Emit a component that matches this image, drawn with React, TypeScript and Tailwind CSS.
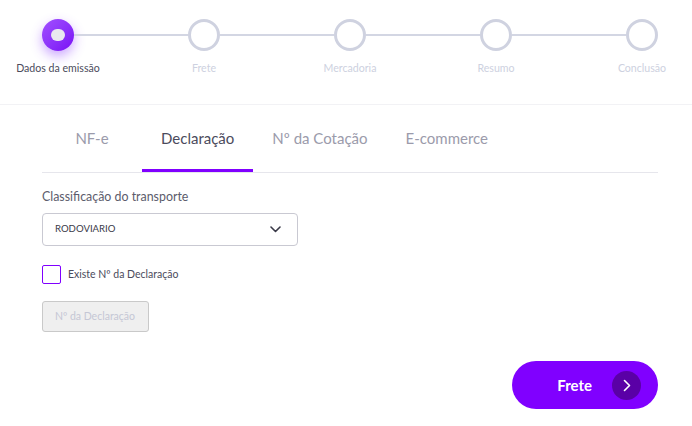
import React from "react";

const steps = ["Dados da emissão", "Frete", "Mercadoria", "Resumo", "Conclusão"];
const tabs = ["NF-e", "Declaração", "Nº da Cotação", "E-commerce"];

export default function App() {
    return (
        <main className="w-[692px] h-[426px] bg-white overflow-hidden" style={{ fontFamily: "Lato, 'Open Sans', sans-serif" }}>
            {/* Stepper */}
            <div className="flex items-start pl-[42px] pr-[34px] pt-[19px] h-[105px] border-b border-[#f2f2f5]">
                {steps.map((label, idx) => (
                    <React.Fragment key={label}>
                        {idx > 0 && <div className="flex-1 h-[2px] mt-[15px] bg-[#d3d6e3]" />}
                        <div className="w-8 flex flex-col items-center">
                            {idx === 0 ? (
                                <div className="w-8 h-8 rounded-full bg-gradient-to-br from-[#a24dff] to-[#7a00f5] shadow-[0_5px_12px_rgba(140,60,255,0.45)] flex items-center justify-center">
                                    <div className="w-[14px] h-[12px] rounded-full bg-[#e9e8ef]" />
                                </div>
                            ) : (
                                <div className="w-8 h-8 rounded-full bg-white border-[3px] border-[#cfd2e0]" />
                            )}
                            <span
                                className={`mt-[10px] whitespace-nowrap text-[10.6px] leading-[14px] ${idx === 0 ? "text-[#4b4b5c]" : "text-[#cdd1e0]"}`}
                            >
                                {label}
                            </span>
                        </div>
                    </React.Fragment>
                ))}
            </div>

            <div className="pl-[42px] pr-[34px]">
                {/* Tabs */}
                <div className="flex border-b border-[#e6e6ec] h-[68px]">
                    {tabs.map((tab, idx) => (
                        <div
                            key={tab}
                            className={`min-w-[100px] px-[19px] flex items-center justify-center text-[15px] pt-[2px] ${
                                idx === 1 ? "text-[#4b4b5c] border-b-[3px] border-[#8000ff]" : "text-[#9b9bab] border-b-[3px] border-transparent"
                            }`}
                        >
                            {tab}
                        </div>
                    ))}
                </div>

                {/* Form */}
                <div className="pt-[16px]">
                    <label className="block text-[12.4px] leading-[16px] text-[#5c5c6c]">Classificação do transporte</label>
                    <div className="mt-[8px] w-[256px] h-[33px] border border-[#c9c9d2] rounded-[4px] flex items-center justify-between pl-[12px] pr-[16px]">
                        <span className="text-[9.6px] text-[#3a3a48]">RODOVIARIO</span>
                        <svg width="11" height="7" viewBox="0 0 11 7" fill="none">
                            <path d="M1 1l4.5 4.5L10 1" stroke="#3a3a48" strokeWidth="1.6" strokeLinecap="round" strokeLinejoin="round" />
                        </svg>
                    </div>

                    <div className="mt-[19px] flex items-center gap-[7px]">
                        <div className="w-[19px] h-[19px] border-[1.5px] border-[#8000ff] rounded-[2px] bg-white" />
                        <span className="text-[10.5px] text-[#4b4b5c]">Existe Nº da Declaração</span>
                    </div>

                    <div className="mt-[17px] w-[107px] h-[31px] bg-[#efefef] border border-[#c9c9c9] rounded-[3px] flex items-center pl-[12px]">
                        <span className="text-[10.5px] text-[#c5c7d5]">Nº da Declaração</span>
                    </div>
                </div>

                <div className="flex justify-end mt-[29px]">
                    <button className="w-[146px] h-[48px] rounded-full bg-[#8000ff] flex items-center justify-end pr-[17px] gap-[20px]">
                        <span className="text-white font-bold text-[15px]">Frete</span>
                        <span className="w-[29px] h-[29px] rounded-full bg-[#5a00a6] flex items-center justify-center">
                            <svg width="8" height="13" viewBox="0 0 8 13" fill="none">
                                <path d="M1.5 1.5l5 5-5 5" stroke="#fff" strokeWidth="1.6" strokeLinecap="round" strokeLinejoin="round" />
                            </svg>
                        </span>
                    </button>
                </div>
            </div>
        </main>
    );
}
